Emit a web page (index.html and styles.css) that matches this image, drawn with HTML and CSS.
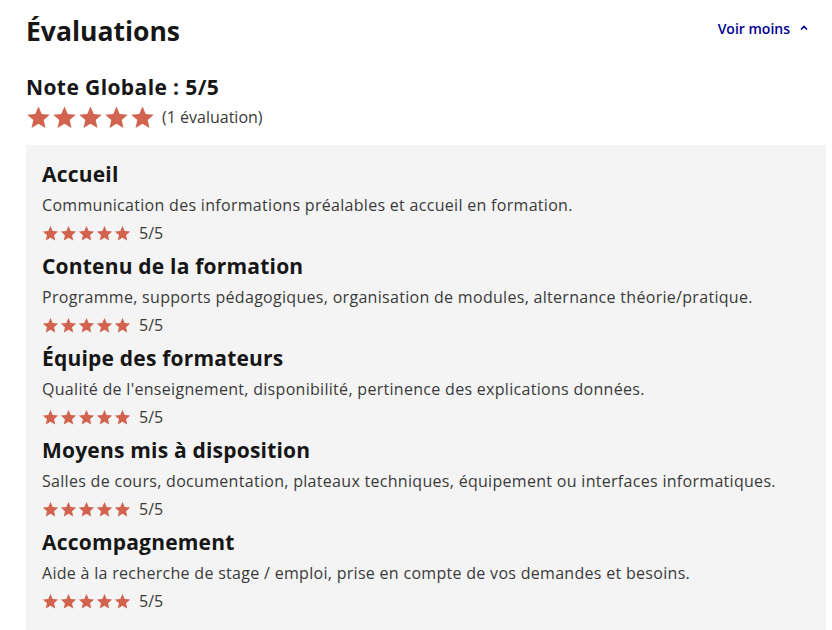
FILE: index.html
```html
<!DOCTYPE html>
<html lang="fr">
<head>
    <meta charset="UTF-8">
    <meta name="viewport" content="width=device-width, initial-scale=1.0">
    <title>Évaluations</title>
    <link rel="stylesheet" href="styles.css">
</head>
<body>
    <svg width="0" height="0" style="position:absolute">
        <defs>
            <symbol id="star" viewBox="0 0 24 24">
                <path d="M12 1.5l3.1 7.1 7.7.7-5.8 5.1 1.7 7.6L12 18l-6.7 4 1.7-7.6L1.2 9.3l7.7-.7z"/>
            </symbol>
        </defs>
    </svg>

    <section class="reviews">
        <!-- Title row with the toggle link -->
        <div class="reviews-head">
            <h2 class="reviews-title">Évaluations</h2>
            <button class="toggle">Voir moins
                <svg class="chevron" viewBox="0 0 10 10"><path d="M2 6.5L5 3.5 8 6.5"/></svg>
            </button>
        </div>

        <!-- Overall score -->
        <div class="global">
            <h3 class="global-title">Note Globale : 5/5</h3>
            <div class="rating rating-big">
                <span class="stars">
                    <svg><use href="#star"/></svg><svg><use href="#star"/></svg><svg><use href="#star"/></svg><svg><use href="#star"/></svg><svg><use href="#star"/></svg>
                </span>
                <span class="count">(1 évaluation)</span>
            </div>
        </div>

        <!-- Score per criterion -->
        <ul class="criteria">
            <li class="criterion">
                <h4>Accueil</h4>
                <p>Communication des informations préalables et accueil en formation.</p>
                <div class="rating">
                    <span class="stars"><svg><use href="#star"/></svg><svg><use href="#star"/></svg><svg><use href="#star"/></svg><svg><use href="#star"/></svg><svg><use href="#star"/></svg></span>
                    <span class="score">5/5</span>
                </div>
            </li>
            <li class="criterion">
                <h4>Contenu de la formation</h4>
                <p>Programme, supports pédagogiques, organisation de modules, alternance théorie/pratique.</p>
                <div class="rating">
                    <span class="stars"><svg><use href="#star"/></svg><svg><use href="#star"/></svg><svg><use href="#star"/></svg><svg><use href="#star"/></svg><svg><use href="#star"/></svg></span>
                    <span class="score">5/5</span>
                </div>
            </li>
            <li class="criterion">
                <h4>Équipe des formateurs</h4>
                <p>Qualité de l'enseignement, disponibilité, pertinence des explications données.</p>
                <div class="rating">
                    <span class="stars"><svg><use href="#star"/></svg><svg><use href="#star"/></svg><svg><use href="#star"/></svg><svg><use href="#star"/></svg><svg><use href="#star"/></svg></span>
                    <span class="score">5/5</span>
                </div>
            </li>
            <li class="criterion">
                <h4>Moyens mis à disposition</h4>
                <p>Salles de cours, documentation, plateaux techniques, équipement ou interfaces informatiques.</p>
                <div class="rating">
                    <span class="stars"><svg><use href="#star"/></svg><svg><use href="#star"/></svg><svg><use href="#star"/></svg><svg><use href="#star"/></svg><svg><use href="#star"/></svg></span>
                    <span class="score">5/5</span>
                </div>
            </li>
            <li class="criterion">
                <h4>Accompagnement</h4>
                <p>Aide à la recherche de stage / emploi, prise en compte de vos demandes et besoins.</p>
                <div class="rating">
                    <span class="stars"><svg><use href="#star"/></svg><svg><use href="#star"/></svg><svg><use href="#star"/></svg><svg><use href="#star"/></svg><svg><use href="#star"/></svg></span>
                    <span class="score">5/5</span>
                </div>
            </li>
        </ul>
    </section>
</body>
</html>
```

FILE: styles.css
```css
/* Reviews block */
body {
    margin: 0;
    background-color: #fff;
    color: #161616;
    font-family: "Open Sans", "Liberation Sans", sans-serif;
}

.reviews {
    padding: 13px 6px 0 26px;
}

.reviews-head {
    display: flex;
    justify-content: space-between;
    align-items: center;
}

.reviews-title {
    margin: 0;
    font-size: 26.5px;
    line-height: 36px;
    font-weight: 700;
}

.toggle {
    display: flex;
    align-items: center;
    gap: 9px;
    margin: 0 17px 6px 0;
    padding: 0;
    border: none;
    background: none;
    color: #000091;
    font-family: inherit;
    font-size: 14px;
    font-weight: 600;
    cursor: pointer;
}

.chevron {
    width: 10px;
    height: 10px;
    fill: none;
    stroke: #000091;
    stroke-width: 1.6;
}

.global {
    margin-top: 24px;
}

.global-title {
    margin: 0;
    font-size: 21px;
    line-height: 28px;
    font-weight: 700;
    letter-spacing: 0.4px;
}

.rating {
    display: flex;
    align-items: center;
    gap: 8px;
    height: 20px;
}

.stars {
    display: flex;
    gap: 1px;
    fill: #d2634f;
}

.stars svg {
    width: 17px;
    height: 17px;
}

.rating-big {
    height: 30px;
    gap: 7px;
    margin-top: 1px;
}

.rating-big .stars svg {
    width: 25px;
    height: 25px;
}

.count {
    font-size: 16px;
    color: #3a3a3a;
}

.criteria {
    list-style: none;
    margin: 13px 0 0 0;
    padding: 15px 16px 30px 16px;
    background-color: #f4f4f4;
    display: flex;
    flex-direction: column;
    gap: 9px;
}

.criterion h4 {
    margin: 0;
    font-size: 21px;
    line-height: 28px;
    font-weight: 700;
    letter-spacing: 0.2px;
}

.criterion p {
    margin: 5px 0 6px 0;
    font-size: 16px;
    line-height: 24px;
    letter-spacing: 0.3px;
    color: #3a3a3a;
}

.score {
    font-size: 16px;
    color: #3a3a3a;
}
```
